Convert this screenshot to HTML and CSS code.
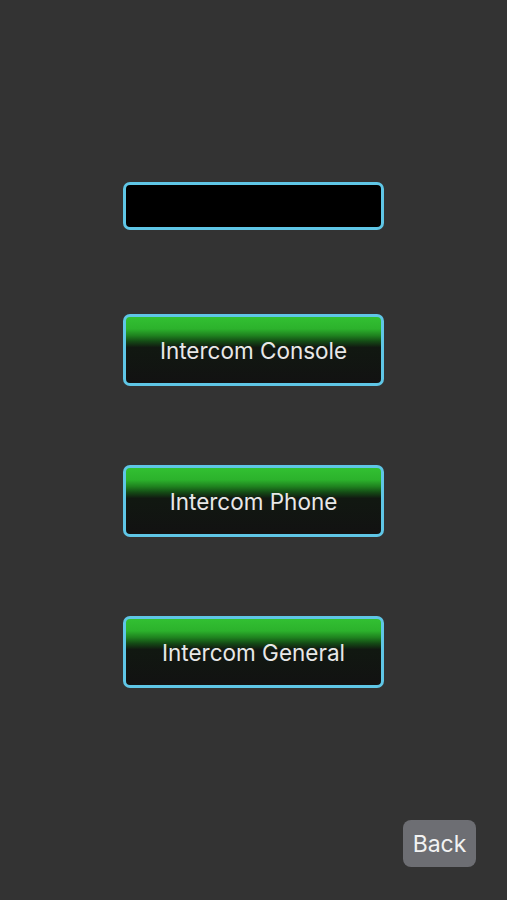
FILE: index.html
```html
<!DOCTYPE html>
<html lang="en">
<head>
    <meta charset="UTF-8">
    <meta name="viewport" content="width=device-width, initial-scale=1.0">
    <title>Intercom</title>
    <link rel="stylesheet" href="styles.css">
</head>
<body>
    <div class="screen">
        <div class="menu">
            <input type="text" class="field" aria-label="Name">
            <div class="buttons">
                <button class="btn">Intercom Console</button>
                <button class="btn">Intercom Phone</button>
                <button class="btn">Intercom General</button>
            </div>
        </div>
        <div class="footer">
            <button class="back">Back</button>
        </div>
    </div>
</body>
</html>
```

FILE: styles.css
```css
body {
    margin: 0;
    background-color: #333333;
    font-family: Inter, Roboto, "Liberation Sans", sans-serif;
}
.screen {
    height: 900px;
    display: flex;
    flex-direction: column;
}
.menu {
    display: flex;
    flex-direction: column;
    align-items: center;
    padding-top: 182px;
}
.field {
    box-sizing: border-box;
    width: 261px;
    height: 48px;
    margin: 0 0 84px;
    background-color: #000;
    border: 3px solid #5fc6e6;
    border-radius: 7px;
    color: #fff;
    outline: none;
}
.buttons {
    display: flex;
    flex-direction: column;
    gap: 79px;
}
.btn {
    box-sizing: border-box;
    width: 261px;
    height: 72px;
    padding: 0;
    border: 3px solid #5fc6e6;
    border-radius: 7px;
    background: linear-gradient(to bottom, #32c032 0%, #2cb22c 18%, #1f821f 28%, #144a15 37%, #111811 46%, #121212 100%);
    color: #e8e8e8;
    font-family: inherit;
    font-size: 22.5px;
}
.footer {
    display: flex;
    justify-content: flex-end;
    padding: 132px 31px 0 0;
}
.back {
    width: 73px;
    height: 47px;
    padding: 0;
    border: none;
    border-radius: 8px;
    background-color: #6d6e73;
    color: #f2f2f2;
    font-family: inherit;
    font-size: 23px;
}
```
